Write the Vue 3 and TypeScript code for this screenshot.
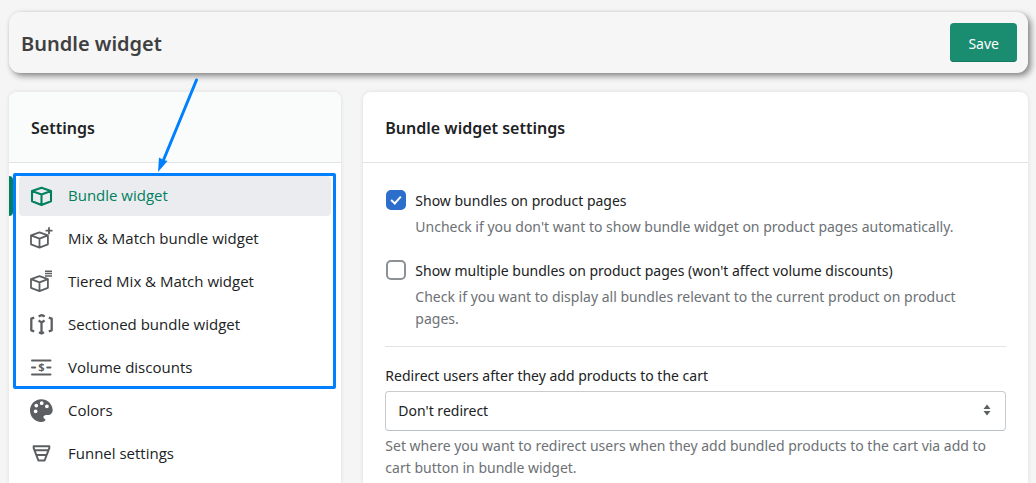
<script setup lang="ts">
import { ref } from 'vue'

interface NavItem {
  id: string
  label: string
}

const bundleItems: NavItem[] = [
  { id: 'bundle', label: 'Bundle widget' },
  { id: 'mix', label: 'Mix & Match bundle widget' },
  { id: 'tiered', label: 'Tiered Mix & Match widget' },
  { id: 'sectioned', label: 'Sectioned bundle widget' },
  { id: 'volume', label: 'Volume discounts' },
]
const otherItems: NavItem[] = [
  { id: 'colors', label: 'Colors' },
  { id: 'funnel', label: 'Funnel settings' },
]
const groups = [
  { name: 'widgets', highlighted: true, items: bundleItems },
  { name: 'general', highlighted: false, items: otherItems },
]

const active = ref('bundle')
const showBundles = ref(true)
const showMultiple = ref(false)
const redirect = ref('none')
</script>

<template>
  <div class="page">
    <header class="topbar">
      <h1>Bundle widget</h1>
      <button type="button" class="save">Save</button>
    </header>

    <div class="columns">
      <aside class="card">
        <h2 class="card-head tinted">Settings</h2>
        <nav class="nav" aria-label="Settings">
          <ul v-for="group in groups" :key="group.name" :class="{ highlighted: group.highlighted }">
            <li v-for="item in group.items" :key="item.id" :class="{ active: item.id === active }">
              <a :href="'#' + item.id" @click.prevent="active = item.id">
                <svg class="icon" viewBox="0 0 24 24" aria-hidden="true">
                  <g v-if="item.id === 'bundle'" class="line cube">
                    <path d="M12.500 3.800 22 6.900V17.300L12.500 21 3 17.300V6.900ZM3 6.900 12.500 10.400 22 6.900M12.500 10.400V21" />
                  </g>
                  <g v-else-if="item.id === 'mix'" class="line">
                    <path d="M10.500 5.300 18.900 8.300V17.300L10.500 20.600 2 17.300V8.300ZM2 8.300 10.500 11.600 18.900 8.300M10.500 11.600V20.600" />
                    <path d="M20 .3V7.200M16.600 3.700H23.500" />
                  </g>
                  <g v-else-if="item.id === 'tiered'" class="line">
                    <path d="M10.500 6.100 18.900 9.100V17.800L10.500 21.100 2 17.800V9.100ZM2 9.100 10.500 12.400 18.900 9.100M10.500 12.400V21.100" />
                    <path class="thin" d="M16 1.300H23M16 3.600H23M16 5.900H23" />
                  </g>
                  <g v-else-if="item.id === 'sectioned'" class="line bracket">
                    <path d="M5.200 4.600 2.300 5.600V17.300L5.200 18.300M19.800 4.600 22.700 5.600V17.300L19.800 18.300" />
                    <path d="M9.800 3.700Q12.700 .9 15.600 3.700M9.600 7.500 12.500 9.400 15.600 7.500M12.500 9.400V20M10 19.300 12.500 20.600 15 19.300" />
                  </g>
                  <g v-else-if="item.id === 'volume'">
                    <path class="line thick" d="M3 4.500H21.500M3 18.500H21.500M3 11.500H6.200M18.200 11.500H21.500" />
                    <text x="12.300" y="15.300">$</text>
                  </g>
                  <g v-else-if="item.id === 'colors'">
                    <path
                      class="solid"
                      fill-rule="evenodd"
                      d="M12.200.2C5.800.2 1 5.300 1 11.500 1 17.900 6 22.800 12 22.900 14.500 23 16.600 22 16.500 20.700 16.400 19.800 15 19.900 14.600 19 13.800 17.300 15.500 15.800 17.800 16 21 16.300 23.700 14.500 23.700 10.900 23.300 4.800 18.500.2 12.200.2ZM6.600 10.400a1.900 1.900 0 1 1 0 3.800 1.900 1.900 0 0 1 0-3.800ZM7.300 4.700a1.900 1.900 0 1 1 0 3.800 1.900 1.900 0 0 1 0-3.800ZM12.700 2.300a1.900 1.900 0 1 1 0 3.800 1.900 1.900 0 0 1 0-3.800ZM17.900 5.400a1.900 1.900 0 1 1 0 3.800 1.900 1.900 0 0 1 0-3.800Z"
                    />
                  </g>
                  <g v-else class="line thick">
                    <path d="M4.700 4.200H20.300V6.200L15.600 18.500H9.400L4.700 6.200ZM5.500 8.300H19.500M7.300 13H17.700" />
                  </g>
                </svg>
                <span>{{ item.label }}</span>
              </a>
            </li>
          </ul>
        </nav>
        <svg class="pointer" viewBox="0 0 50 100" aria-hidden="true">
          <path class="shaft" d="M42.500 4 9.500 84" />
          <path class="head" d="M4 96 5 81.500 9.500 84 13.500 85Z" />
        </svg>
      </aside>

      <main class="card">
        <h2 class="card-head">Bundle widget settings</h2>
        <div class="body">
          <div class="choice">
            <input id="show-bundles" v-model="showBundles" type="checkbox" aria-describedby="show-bundles-help" />
            <div>
              <label for="show-bundles">Show bundles on product pages</label>
              <p id="show-bundles-help" class="help">
                Uncheck if you don't want to show bundle widget on product pages automatically.
              </p>
            </div>
          </div>
          <div class="choice">
            <input id="show-multiple" v-model="showMultiple" type="checkbox" aria-describedby="show-multiple-help" />
            <div>
              <label for="show-multiple">Show multiple bundles on product pages (won't affect volume discounts)</label>
              <p id="show-multiple-help" class="help">
                Check if you want to display all bundles relevant to the current product on product pages.
              </p>
            </div>
          </div>
          <hr />
          <div class="field">
            <label for="redirect">Redirect users after they add products to the cart</label>
            <div class="select">
              <select id="redirect" v-model="redirect" aria-describedby="redirect-help">
                <option value="none">Don't redirect</option>
              </select>
              <svg viewBox="0 0 8 12" aria-hidden="true">
                <path d="M4 .5 7.500 5H.5ZM4 11.500 .5 7H7.500Z" />
              </svg>
            </div>
            <p id="redirect-help" class="help">
              Set where you want to redirect users when they add bundled products to the cart via add to cart button in
              bundle widget.
            </p>
          </div>
        </div>
      </main>
    </div>
  </div>
</template>

<style>
body {
  margin: 0;
  background: #f5f5f5;
}
</style>

<style scoped>
* {
  box-sizing: border-box;
}
.page {
  display: flex;
  flex-direction: column;
  gap: 19px;
  min-height: 100vh;
  padding: 12px 8px 0 9px;
  background: #f5f5f5;
  color: #202223;
  font: 14px/22px 'Segoe UI', 'Noto Sans', 'Open Sans', sans-serif;
}
h1,
h2,
p,
ul {
  margin: 0;
  padding: 0;
}
.topbar {
  display: flex;
  align-items: center;
  justify-content: space-between;
  padding: 11px 11px 11px 12px;
  border-radius: 11px;
  background: #f6f6f6;
  box-shadow: 3px 3px 6px rgba(0, 0, 0, 0.45), 0 0 3px rgba(0, 0, 0, 0.08);
}
h1 {
  padding-top: 2px;
  color: #404040;
  font-size: 20px;
  font-weight: 600;
  line-height: 28px;
}
.save {
  height: 39px;
  padding: 2px 18px 0;
  border: 0;
  border-radius: 4px;
  background: #1a8c70;
  box-shadow: inset 0 -1px 0 #167a62;
  color: #fff;
  font: inherit;
}
.columns {
  display: grid;
  flex: 1;
  grid-template-columns: 1fr 2fr;
  gap: 22px;
}
.card {
  position: relative;
  border-radius: 8px 8px 0 0;
  background: #fff;
  box-shadow: 0 0 4px rgba(23, 24, 24, 0.1);
}
.card-head {
  padding: 25px 22px 23px;
  border-bottom: 1px solid #e1e3e5;
  border-radius: 8px 8px 0 0;
  font-size: 16px;
  font-weight: 600;
  line-height: 22px;
}
.tinted {
  background: #fafcfb;
}
.nav {
  display: grid;
  gap: 3px;
  padding: 13px 10px 0;
  font-family: 'Segoe UI', 'Open Sans', 'Noto Sans', sans-serif;
  font-size: 15px;
}
.nav ul {
  display: grid;
  position: relative;
  gap: 3px;
  list-style: none;
}
.highlighted::after {
  position: absolute;
  inset: -3px -5px -1px -6px;
  border: 3px solid #0080ff;
  border-radius: 2px;
  content: '';
  pointer-events: none;
}
.nav li {
  position: relative;
}
.nav a {
  display: flex;
  align-items: center;
  gap: 15px;
  height: 40px;
  padding: 0 10px;
  border-radius: 4px;
  color: inherit;
  text-decoration: none;
}
.nav span {
  padding-bottom: 3px;
}
.nav .active a {
  background: #ebecef;
  color: #008060;
}
.active::before {
  position: absolute;
  inset: 0 auto 0 -10px;
  width: 4px;
  border-radius: 0 4px 4px 0;
  background: #008060;
  content: '';
}
.icon {
  flex: none;
  width: 24px;
  height: 24px;
  color: #5c5f62;
}
.active .icon {
  color: #008060;
}
.line {
  fill: none;
  stroke: currentColor;
  stroke-linejoin: round;
  stroke-width: 1.8;
}
.cube {
  stroke-width: 2.1;
}
.thin {
  stroke-width: 1.5;
}
.thick {
  stroke-linecap: round;
  stroke-width: 2;
}
.bracket {
  stroke-width: 2.3;
}
.solid {
  fill: currentColor;
}
.icon text {
  fill: currentColor;
  font-size: 11px;
  font-weight: 700;
  text-anchor: middle;
}
.pointer {
  position: absolute;
  top: -16px;
  left: 145px;
  width: 50px;
  height: 100px;
  pointer-events: none;
}
.shaft {
  fill: none;
  stroke: #0080ff;
  stroke-linecap: round;
  stroke-width: 3;
}
.head {
  fill: #0080ff;
}
.body {
  padding: 27px 22px 0;
}
.choice {
  display: flex;
  gap: 9px;
  margin-bottom: 22px;
}
.choice .help {
  margin-top: 4px;
  padding-right: 22px;
}
input {
  flex: none;
  width: 20px;
  height: 20px;
  margin: 0 0 0 1px;
  border: 2px solid #8c9196;
  border-radius: 5px;
  background: #fff;
  appearance: none;
}
input:checked {
  display: grid;
  border-color: #2c6ecb;
  background: #2c6ecb;
  place-items: center;
}
input:checked::after {
  width: 4px;
  height: 8px;
  margin-bottom: 2px;
  border: solid #fff;
  border-width: 0 2px 2px 0;
  box-sizing: content-box;
  content: '';
  transform: rotate(42deg);
}
.help {
  color: #6d7175;
}
hr {
  height: 1px;
  margin: -6px 0 18px;
  border: 0;
  background: #e1e3e5;
}
.field label {
  display: block;
}
.select {
  position: relative;
  margin: 4px 0;
}
select {
  display: block;
  width: 100%;
  height: 40px;
  padding: 0 12px;
  border: 1px solid #c9cccf;
  border-bottom-color: #babfc3;
  border-radius: 4px;
  background: #fff;
  appearance: none;
  color: inherit;
  font: inherit;
}
.select svg {
  position: absolute;
  top: 13px;
  right: 15px;
  width: 8px;
  height: 12px;
  fill: #5c5f62;
  pointer-events: none;
}
</style>
